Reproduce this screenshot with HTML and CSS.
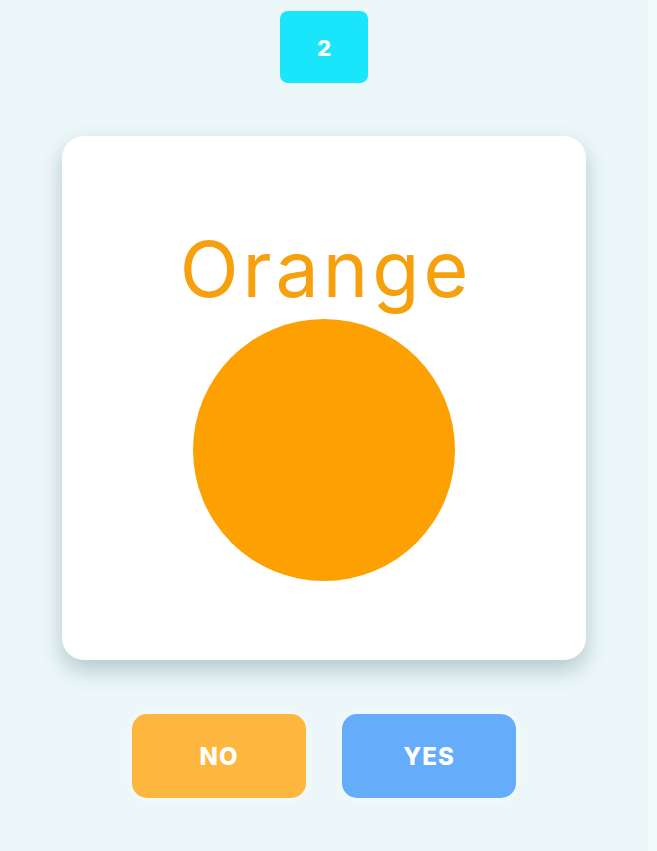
FILE: index.html
```html
<!DOCTYPE html>
<html>
<head>
<meta charset="utf-8">
<link rel="stylesheet" href="styles.css">
</head>
<body>
<div class="app">
  <div class="badge">2</div>
  <div class="card">
    <div class="word">Orange</div>
    <div class="dot"></div>
  </div>
  <div class="buttons">
    <button class="btn no">NO</button>
    <button class="btn yes">YES</button>
  </div>
</div>
</body>
</html>
```
FILE: styles.css
```css
html, body {
  margin: 0;
  padding: 0;
  background: #f1fcfd;
}
.app {
  width: 648px;
  height: 851px;
  background: #ecf7f9;
  display: flex;
  flex-direction: column;
  align-items: center;
  font-family: Inter, "Noto Sans", sans-serif;
  box-sizing: border-box;
  padding-top: 11px;
}
.badge {
  width: 88px;
  height: 72px;
  border-radius: 8px;
  background: #19e5fb;
  color: #fff;
  font-weight: 800;
  font-size: 22px;
  display: flex;
  align-items: center;
  justify-content: center;
  padding-top: 2px;
  box-sizing: border-box;
}
.card {
  margin-top: 53px;
  width: 524px;
  height: 524px;
  background: #fff;
  border-radius: 22px;
  box-shadow: 0 10px 22px rgba(40, 80, 90, 0.28);
  display: flex;
  flex-direction: column;
  align-items: center;
  box-sizing: border-box;
  padding-top: 88px;
}
.word {
  color: #f5a00c;
  font-size: 77px;
  font-weight: 400;
  line-height: 90px;
  letter-spacing: 4px;
  padding-left: 4px;
  height: 95px;
}
.dot {
  width: 262px;
  height: 262px;
  border-radius: 50%;
  background: #fda002;
}
.buttons {
  margin-top: 54px;
  display: flex;
  gap: 36px;
}
.btn {
  width: 174px;
  height: 84px;
  border: none;
  border-radius: 15px;
  color: #fff;
  font-family: Inter, "Noto Sans", sans-serif;
  font-weight: 800;
  font-size: 24px;
  letter-spacing: 1px;
  padding-top: 2px;
  box-shadow: 0 0 14px rgba(255, 255, 255, 0.6);
}
.no { background: #fdb73f; }
.yes { background: #65adfb; }
```
